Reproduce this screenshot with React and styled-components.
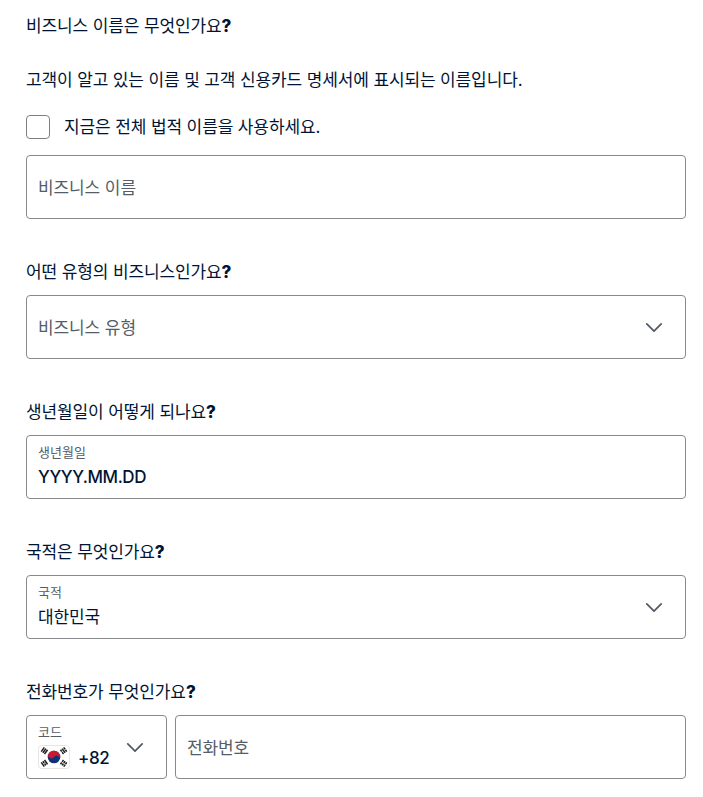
import React from 'react';
import styled, { createGlobalStyle } from 'styled-components';

const Global = createGlobalStyle`
  * { box-sizing: border-box; }
  body { margin: 0; background: #fff; color: #001435; font-family: Inter, "Noto Sans CJK KR", sans-serif; }
`;
const Form = styled.form`
  width: 703px; padding: 10px 17px 18px 26px; display: flex; flex-direction: column;
`;
const Section = styled.section`
  display: flex; flex-direction: column; margin-bottom: ${p => (p.$last ? 0 : 37)}px;
`;
const Heading = styled.h2`
  margin: 0 0 7px; height: 32px; line-height: 32px; font-size: 17px; font-weight: 400;
  letter-spacing: -0.12px; white-space: nowrap;
`;
const Mark = styled.b`
  font-weight: 800; font-size: 17px;
`;
const Hint = styled.p`
  margin: 15px 0 19px; height: 32px; line-height: 32px; font-size: 17px;
  letter-spacing: -0.13px; white-space: nowrap;
`;
const CheckRow = styled.label`
  display: flex; align-items: center; gap: 14px; height: 24px; margin-bottom: 16px; font-size: 17px;
  letter-spacing: -0.12px; white-space: nowrap;
`;
const CheckText = styled.span`
  line-height: 24px;
`;
const Box = styled.span`
  width: 24px; height: 24px; border: 1px solid #7d7f81; border-radius: 4px;
`;
const Field = styled.div`
  height: 64px; width: ${p => p.$width || 'auto'}; flex: ${p => (p.$grow ? 1 : 'none')};
  border: 1px solid #87898b; border-radius: 4px; padding: 0 19px 0 11px;
  display: flex; align-items: center; justify-content: space-between;
`;
const Placeholder = styled.span`
  color: #545d68; font-size: 17px; line-height: 24px; letter-spacing: -0.1px; padding-top: 1px;
`;
const Stack = styled.div`
  display: flex; flex-direction: column; gap: 2px; padding-bottom: 4px;
`;
const Small = styled.span`
  color: #545d68; font-size: 13px; line-height: 22px;
`;
const Value = styled.span`
  display: flex; align-items: center; gap: 8px; height: 24px; font-size: 17px; line-height: 24px;
  font-weight: ${p => (p.$latin ? 500 : 400)}; letter-spacing: ${p => (p.$latin ? -0.45 : -0.1)}px;
`;
const DialCode = styled.span`
  padding-top: 2px;
`;
const Row = styled.div`
  display: flex; gap: 8px;
`;
const FlagFrame = styled.svg`
  display: block; flex: none;
`;

const Chevron = () => (
  <svg width="24" height="24" viewBox="0 0 24 24" fill="none" stroke="#4f5863" strokeWidth="1.7" strokeLinecap="round" strokeLinejoin="round"><path d="M4.8 8.9 12 16.1l7.2-7.2" /></svg>
);

const Trigram = ({ x, y, angle, broken }) => (
  <g transform={`translate(${x} ${y}) rotate(${angle})`} stroke="#1c1c1c" strokeWidth="1.5">
    {[-2, 0, 2].map((dy, i) => (
      <path key={dy} d={broken[i] ? `M-2.6 ${dy}h2.3M.3 ${dy}H2.6` : `M-2.6 ${dy}H2.6`} />
    ))}
  </g>
);

const Flag = () => (
  <FlagFrame width="32" height="24" viewBox="0 0 32 24">
    <rect x=".5" y=".5" width="31" height="23" rx="3" fill="#fff" stroke="#e8e4e1" />
    <circle cx="16" cy="12" r="6.3" fill="#0b3277" />
    <path d="M10.76 8.5A6.3 6.3 0 0 1 21.24 15.5A3.15 3.15 0 0 0 16 12A3.15 3.15 0 0 1 10.76 8.5Z" fill="#cb1832" />
    <Trigram x={6.4} y={5.7} angle={-54} broken={[0, 0, 0]} />
    <Trigram x={25.6} y={5.7} angle={54} broken={[1, 0, 1]} />
    <Trigram x={6.4} y={18.3} angle={54} broken={[0, 1, 0]} />
    <Trigram x={25.6} y={18.3} angle={-54} broken={[1, 1, 1]} />
  </FlagFrame>
);

export default function App() {
  return (
    <>
      <Global />
      <Form>
        <Section>
          <Heading>비즈니스 이름은 무엇인가요<Mark>?</Mark></Heading>
          <Hint>고객이 알고 있는 이름 및 고객 신용카드 명세서에 표시되는 이름입니다.</Hint>
          <CheckRow><Box /><CheckText>지금은 전체 법적 이름을 사용하세요.</CheckText></CheckRow>
          <Field><Placeholder>비즈니스 이름</Placeholder></Field>
        </Section>
        <Section>
          <Heading>어떤 유형의 비즈니스인가요<Mark>?</Mark></Heading>
          <Field><Placeholder>비즈니스 유형</Placeholder><Chevron /></Field>
        </Section>
        <Section>
          <Heading>생년월일이 어떻게 되나요<Mark>?</Mark></Heading>
          <Field><Stack><Small>생년월일</Small><Value $latin>YYYY.MM.DD</Value></Stack></Field>
        </Section>
        <Section>
          <Heading>국적은 무엇인가요<Mark>?</Mark></Heading>
          <Field><Stack><Small>국적</Small><Value>대한민국</Value></Stack><Chevron /></Field>
        </Section>
        <Section $last>
          <Heading>전화번호가 무엇인가요<Mark>?</Mark></Heading>
          <Row>
            <Field $width="141px"><Stack><Small>코드</Small><Value $latin><Flag /><DialCode>+82</DialCode></Value></Stack><Chevron /></Field>
            <Field $grow><Placeholder>전화번호</Placeholder></Field>
          </Row>
        </Section>
      </Form>
    </>
  );
}
